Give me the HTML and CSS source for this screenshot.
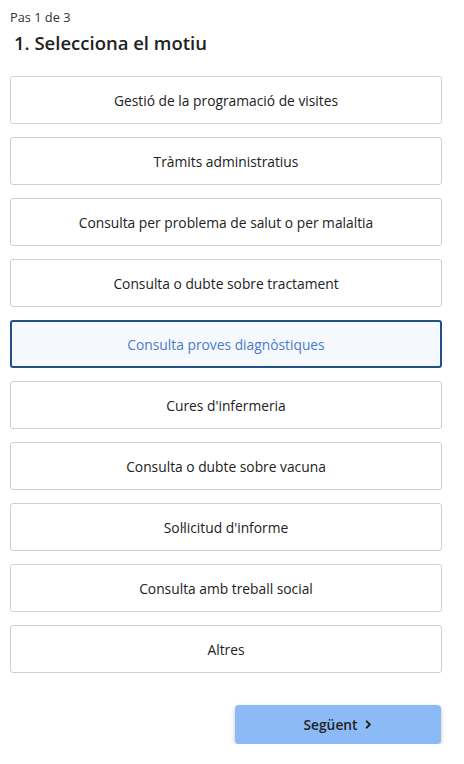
FILE: index.html
```html
<!DOCTYPE html>
<html lang="ca">
<head>
<meta charset="utf-8">
<link rel="stylesheet" href="styles.css">
</head>
<body>
<main class="page">
  <div class="step">Pas 1 de 3</div>
  <h1 class="title">1. Selecciona el motiu</h1>
  <div class="options">
    <button class="option">Gestió de la programació de visites</button>
    <button class="option">Tràmits administratius</button>
    <button class="option">Consulta per problema de salut o per malaltia</button>
    <button class="option">Consulta o dubte sobre tractament</button>
    <button class="option selected">Consulta proves diagnòstiques</button>
    <button class="option">Cures d'infermeria</button>
    <button class="option">Consulta o dubte sobre vacuna</button>
    <button class="option">Sol·licitud d'informe</button>
    <button class="option">Consulta amb treball social</button>
    <button class="option">Altres</button>
  </div>
  <div class="actions">
    <button class="next">Següent
      <svg class="chev" viewBox="0 0 10 10" width="9" height="9"><path d="M3 1.5 L6.5 5 L3 8.5" fill="none" stroke="#222" stroke-width="2.2" stroke-linecap="round" stroke-linejoin="round"/></svg>
    </button>
  </div>
</main>
</body>
</html>
```

FILE: styles.css
```css
* { box-sizing: border-box; }
html, body { margin: 0; padding: 0; background: #fff; }
body { font-family: "Open Sans", "Noto Sans", sans-serif; color: #222; }
.page { padding: 9px 22px 0 10px; }
.step { font-size: 12.8px; line-height: 16px; color: #333; }
.title { margin: 6px 0 0 4px; font-size: 18.5px; line-height: 24px; font-weight: 600; color: #222; }
.options { display: flex; flex-direction: column; gap: 13px; margin-top: 21px; }
.option {
  height: 48px; width: 432px; border: 1px solid #cfcfcf; border-radius: 3px; background: #fff;
  font-family: inherit; font-size: 13.8px; color: #222; text-align: center; padding: 0;
}
.option.selected { border: 2px solid #24508a; background: #f5f8fd; color: #4a7bcc; }
.actions { display: flex; justify-content: flex-end; margin-top: 32px; width: 432px; }
.next {
  width: 206px; height: 39px; border: none; border-radius: 4px; background: #8cbaf7;
  box-shadow: 0 2px 4px rgba(0,0,0,0.25);
  font-family: inherit; font-size: 13.8px; font-weight: 600; color: #222;
  display: flex; align-items: center; justify-content: center; gap: 6px; margin-right: 1px;
}
```
